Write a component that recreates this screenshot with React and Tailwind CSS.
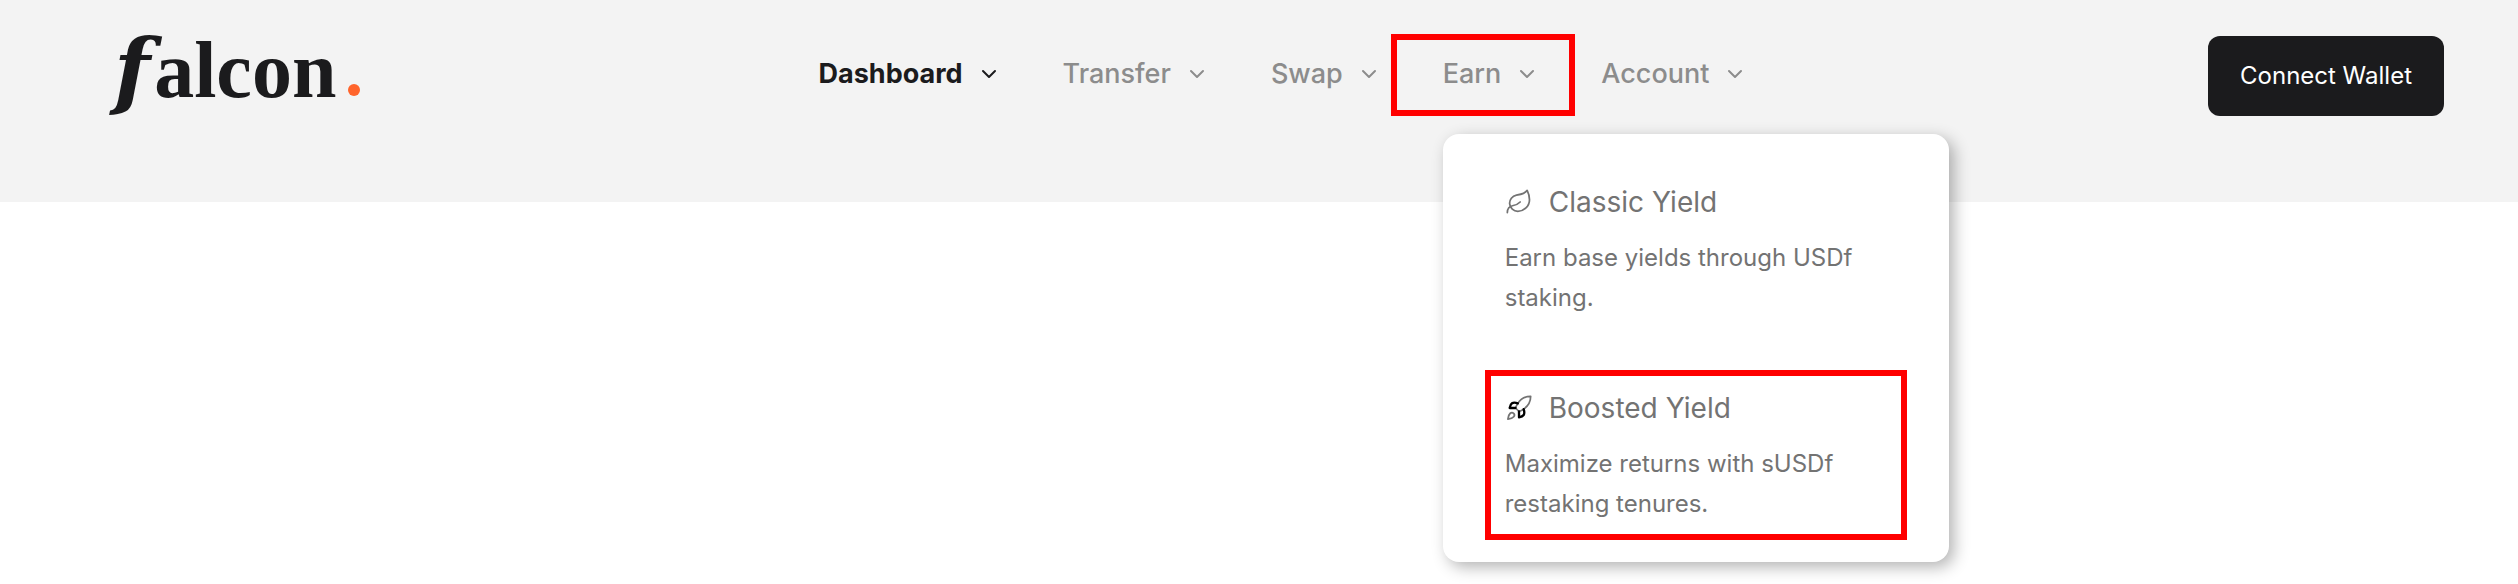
import React from "react";
import { ChevronDown, Leaf } from "lucide-react";

function RocketIcon() {
  return (
    <svg
      viewBox="0 0 24 24"
      fill="none"
      stroke="currentColor"
      strokeWidth="1.5"
      strokeLinecap="round"
      strokeLinejoin="round"
      className="size-7 shrink-0"
      aria-hidden="true"
    >
      <path d="M4.5 16.5c-1.5 1.26-2 5-2 5s3.74-.5 5-2c.71-.84.7-2.13-.09-2.91a2.18 2.18 0 0 0-2.91-.09z" />
      <path d="m12 15-3-3a22 22 0 0 1 2-3.95A12.88 12.88 0 0 1 22 2c0 2.72-.78 7.5-6 11a22.35 22.35 0 0 1-4 2z" />
      <path stroke="#000" strokeWidth="2" d="M9 12H4s.55-3.03 2-4c1.62-1.08 5 0 5 0" />
      <path stroke="#000" strokeWidth="2" d="M12 15v5s3.03-.55 4-2c1.08-1.62 0-5 0-5" />
    </svg>
  );
}

function Logo() {
  return (
    <a
      href="#home"
      className="-ml-2 flex h-20 items-start font-['Liberation_Serif',serif] font-bold leading-[68px] text-[#1b1b1d]"
    >
      <span className="font-['DejaVu_Serif',serif] text-[84px] italic">f</span>
      <span className="ml-1 text-[80px]">alcon</span>
      <span className="mt-12 ml-3 size-3 rounded-full bg-[#ff642b]" />
    </a>
  );
}

function NavItem({ label, active = false, expanded = false }) {
  return (
    <button
      type="button"
      aria-expanded={expanded}
      className={
        active
          ? "flex h-19 items-center gap-3.5 font-bold text-[#1b1b1d]"
          : "flex h-19 items-center gap-3.5 font-medium text-[#8c8c8c]"
      }
    >
      {label}
      <ChevronDown className="size-6" strokeWidth={2} aria-hidden="true" />
    </button>
  );
}

function MenuEntry({ icon, title, text, highlighted = false }) {
  return (
    <a href="#yield" className="relative flex flex-col gap-4">
      <span className="flex h-10 items-center gap-4 text-[28px]">
        {icon}
        {title}
      </span>
      <span className="text-2xl leading-10">{text}</span>
      {highlighted && (
        <span className="pointer-events-none absolute -inset-x-5 -top-4.5 -bottom-4 border-6 border-[#ff0000]" />
      )}
    </a>
  );
}

function EarnMenu() {
  return (
    <div className="absolute top-[98px] left-0 flex w-[506px] flex-col gap-[70px] rounded-2xl bg-white px-[62px] pt-12 pb-[38px] text-[#737373] shadow-[5px_5px_16px_rgba(0,0,0,0.3)]">
      <MenuEntry
        icon={<Leaf className="size-7 shrink-0" strokeWidth={1.5} aria-hidden="true" />}
        title="Classic Yield"
        text="Earn base yields through USDf staking."
      />
      <MenuEntry
        icon={<RocketIcon />}
        title="Boosted Yield"
        text="Maximize returns with sUSDf restaking tenures."
        highlighted
      />
    </div>
  );
}

export default function App() {
  return (
    <div className="min-h-screen bg-white font-[Inter,sans-serif]">
      <header className="grid grid-cols-[1fr_auto_1fr] items-start bg-[#f3f3f3] pt-9 pr-[74px] pb-[86px] pl-[122px]">
        <Logo />
        <nav className="flex gap-[62px] text-[27px]">
          <NavItem label="Dashboard" active />
          <NavItem label="Transfer" />
          <NavItem label="Swap" />
          <div className="relative">
            <NavItem label="Earn" expanded />
            <span className="pointer-events-none absolute -top-0.5 -right-9 -bottom-1 -left-13 border-6 border-[#ff0000]" />
            <EarnMenu />
          </div>
          <NavItem label="Account" />
        </nav>
        <button
          type="button"
          className="h-20 justify-self-end rounded-xl bg-[#1b1b1d] px-8 text-2xl text-white"
        >
          Connect Wallet
        </button>
      </header>
    </div>
  );
}
